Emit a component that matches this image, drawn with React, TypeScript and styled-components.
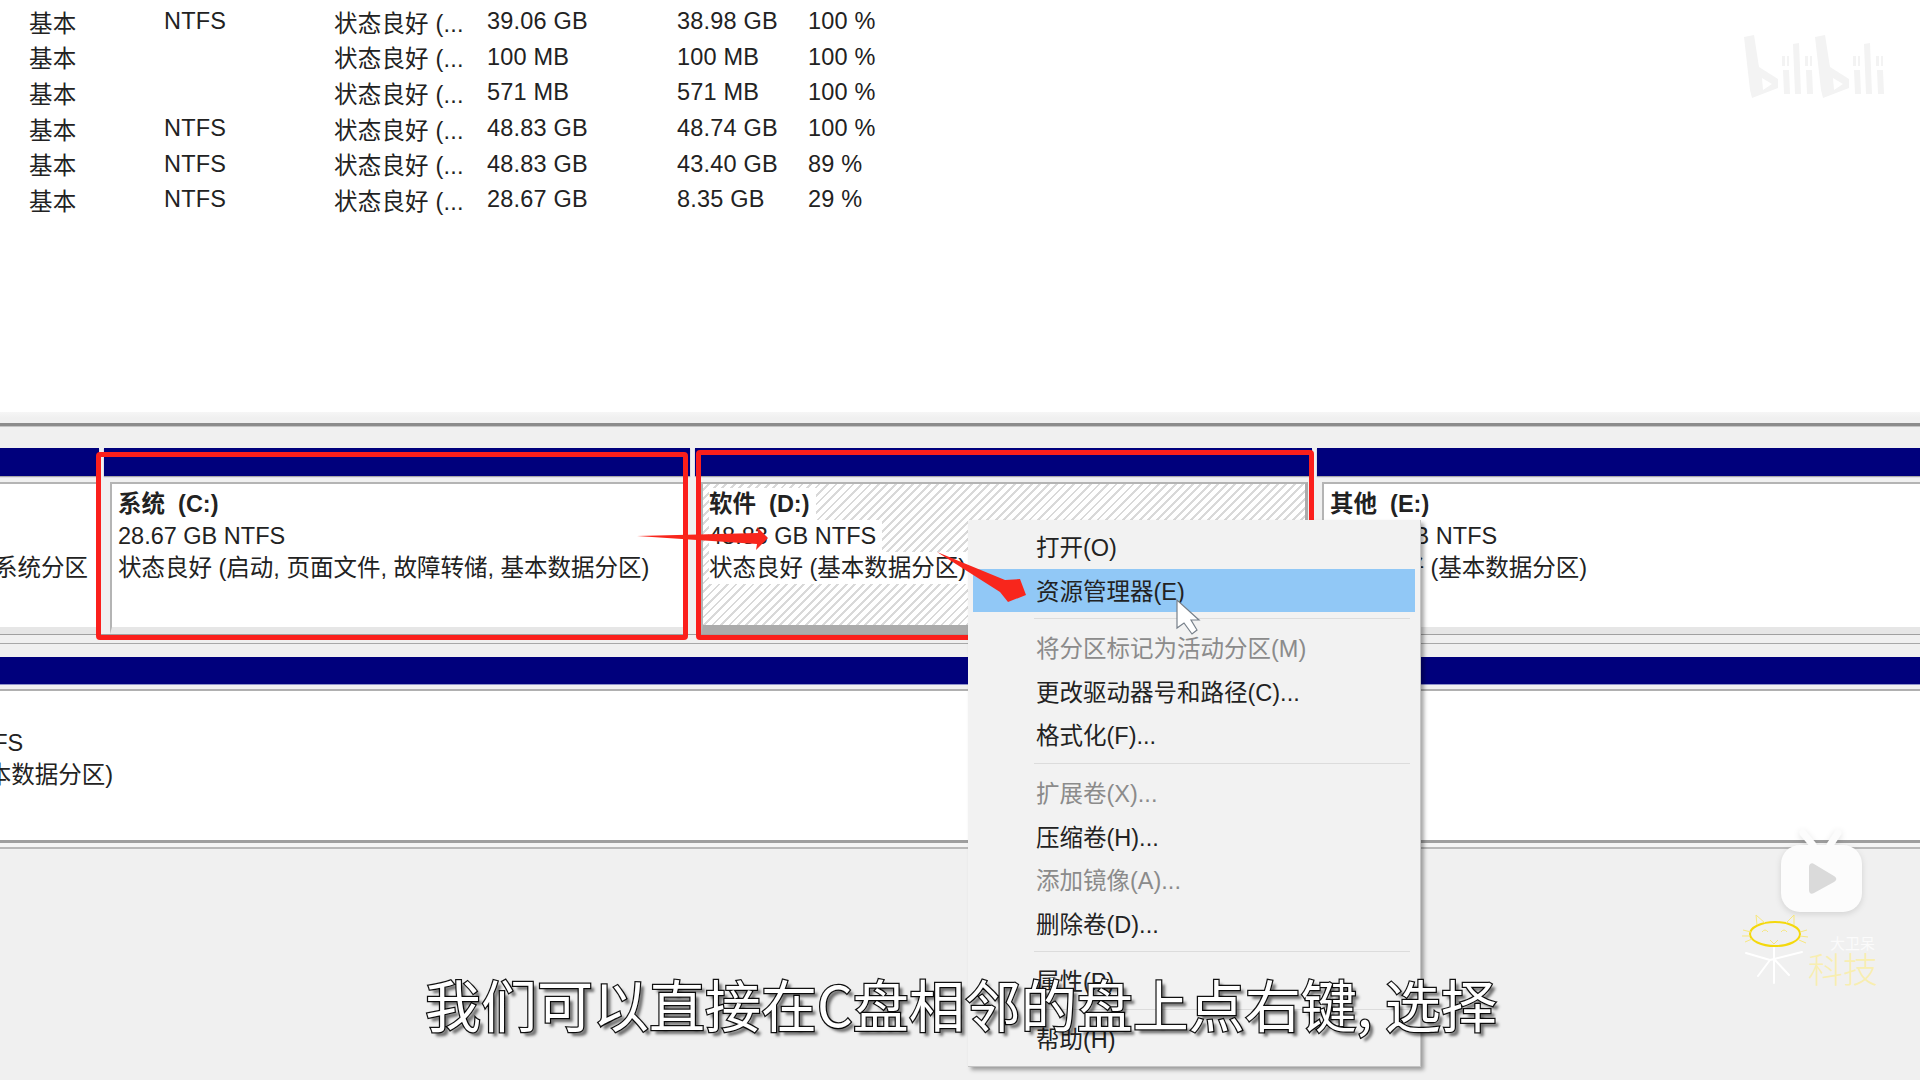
import React from 'react';
import styled, { createGlobalStyle } from 'styled-components';

const GlobalStyle = createGlobalStyle`
  html, body {
    margin: 0;
    padding: 0;
    background: #f0f0f0;
    overflow: hidden;
  }
`;

const FONT = `"Liberation Sans", "Noto Sans CJK SC", sans-serif`;

const Page = styled.div`
  position: relative;
  width: 1920px;
  height: 1080px;
  overflow: hidden;
  background: #f0f0f0;
  font-family: ${FONT};
  font-size: 23.5px;
  color: #222;
`;

// volume list
const VolumeTable = styled.div`
  height: 408px;
  padding: 4px 0 0 29px;
  background: #fff;
`;

const TableRow = styled.div`
  display: grid;
  grid-template-columns: 135px 170px 153px 190px 131px 1fr;
  height: 35.6px;
  align-items: center;
  white-space: nowrap;
  letter-spacing: 0.2px;
`;

const Divider = styled.div`
  height: 36px;
  padding-top: 11px;
  box-sizing: border-box;
  background: linear-gradient(#f6f6f6, #f0f0f0 6px);

  &::before {
    content: '';
    display: block;
    height: 3px;
    background: #8c8c8c;
    border-bottom: 1px solid #c4c4c4;
  }
`;

// disk rows
const DiskRow = styled.div`
  display: flex;
  gap: 5px;
  height: 186px;
  overflow: hidden;
`;

const Volume = styled.div<{ $width: string }>`
  flex: ${({ $width }) => $width};
  min-width: 0;
  display: flex;
  flex-direction: column;
`;

const NavyBar = styled.div<{ $height?: number }>`
  height: ${({ $height }) => $height ?? 28}px;
  flex-shrink: 0;
  background: #00007c;
  box-shadow: 0 1px 1px #8f93c9;
`;

const VolumeFrame = styled.div<{ $inset?: string }>`
  flex: 1;
  min-height: 0;
  padding: ${({ $inset }) => $inset ?? '5px 4px 0 6px'};
  border-top: 1px solid #a8a8a8;
  display: flex;
`;

const VolumeBox = styled.div<{ $hatched?: boolean; $alignEnd?: boolean; $pad?: string }>`
  flex: 1;
  min-width: 0;
  overflow: hidden;
  box-sizing: border-box;
  padding: ${({ $pad }) => $pad ?? '4px 6px'};
  border-top: 2px solid #b4b4b4;
  border-left: ${({ $alignEnd }) => ($alignEnd ? '0' : '2px solid #b4b4b4')};
  border-bottom: 7px solid #e6e6e6;
  display: flex;
  flex-direction: column;
  align-items: ${({ $alignEnd }) => ($alignEnd ? 'flex-end' : 'flex-start')};
  background: ${({ $hatched }) =>
    $hatched
      ? 'repeating-linear-gradient(-45deg, #fff 0 4px, #d9d9d9 4px 6px)'
      : '#fff'};
  ${({ $hatched }) => $hatched && 'border-bottom: 9px solid #ababab; border-right: 3px solid #ababab;'}
`;

const VolumeLine = styled.div<{ $bold?: boolean; $hatched?: boolean }>`
  height: 32px;
  line-height: 32px;
  white-space: pre;
  font-weight: ${({ $bold }) => ($bold ? 700 : 400)};
  ${({ $hatched }) => $hatched && 'background: #fff; padding-right: 6px;'}
`;

const RowGap = styled.div`
  height: 23px;
  box-sizing: border-box;
  border-top: 1px solid #a0a0a0;
  background: #f0f0f0;

  &::before {
    content: '';
    display: block;
    height: 8px;
    border-bottom: 1px solid #a8a8a8;
  }
`;

const SecondDisk = styled.div`
  height: 183px;
  display: flex;
  flex-direction: column;
`;

const SecondBody = styled.div`
  flex: 1;
  padding-top: 36px;
  background: #fff;
  border-top: 2px solid #b0b0b0;
  margin-top: 5px;
  box-shadow: 0 -4px 0 #f0f0f0;
`;

const ClippedText = styled.div`
  margin-left: -144px;
`;

const BottomEdge = styled.div`
  height: 9px;
  border-top: 3px solid #9e9e9e;
  border-bottom: 2px solid #b8b8b8;
  box-sizing: border-box;
  background: #f4f4f4;
`;

// red annotations
const RedFrame = styled.div<{ $x: number; $y: number; $w: number; $h: number }>`
  position: absolute;
  left: ${({ $x }) => $x}px;
  top: ${({ $y }) => $y}px;
  width: ${({ $w }) => $w}px;
  height: ${({ $h }) => $h}px;
  box-sizing: border-box;
  border: 5px solid #fb1f1c;
  border-radius: 4px;
`;

const Annotations = styled.svg`
  position: absolute;
  left: 0;
  top: 0;
  width: 1920px;
  height: 1080px;
  pointer-events: none;
`;

// context menu
const ContextMenu = styled.div`
  position: absolute;
  left: 968px;
  top: 520px;
  width: 453px;
  height: 547px;
  box-sizing: border-box;
  padding: 5px 5px 0;
  background: #f2f2f2;
  border-right: 1px solid #c4c4c4;
  border-bottom: 1px solid #c4c4c4;
  box-shadow: 3px 3px 4px rgba(0, 0, 0, 0.35);
`;

const MenuItem = styled.div<{ $active?: boolean; $disabled?: boolean }>`
  height: 43.6px;
  line-height: 47px;
  padding-left: 63px;
  white-space: nowrap;
  background: ${({ $active }) => ($active ? '#91c8f6' : 'transparent')};
  color: ${({ $disabled }) => ($disabled ? '#8b8b8b' : '#222')};
`;

const MenuSeparator = styled.div`
  height: 1px;
  margin: 6px 5px 7px 61px;
  background: #dcdcdc;
`;

// video overlays
const Subtitle = styled.div`
  position: absolute;
  left: 425px;
  top: 965px;
  font-family: "Noto Sans CJK SC", sans-serif;
  font-size: 56px;
  line-height: 76px;
  white-space: pre;
  color: #fff;
  -webkit-text-stroke: 2.5px #111;
  paint-order: stroke fill;
  text-shadow: 4px 4px 3px rgba(0, 0, 0, 0.55);
`;

const WatermarkLogo = styled.svg`
  position: absolute;
  left: 1700px;
  top: 20px;
  width: 220px;
  height: 100px;
`;

const PlayBadge = styled.svg`
  position: absolute;
  left: 1770px;
  top: 825px;
  width: 105px;
  height: 100px;
  filter: drop-shadow(0 2px 3px rgba(0, 0, 0, 0.12));
`;

const CatLogo = styled.svg`
  position: absolute;
  left: 1740px;
  top: 910px;
  width: 100px;
  height: 80px;
`;

const BrandSmall = styled.div`
  position: absolute;
  left: 1830px;
  top: 932px;
  font-family: "Noto Sans CJK SC", sans-serif;
  font-size: 15px;
  line-height: 22px;
  color: #fbfbfb;
`;

const BrandLarge = styled.div`
  position: absolute;
  left: 1808px;
  top: 943px;
  font-family: "Noto Sans CJK SC", sans-serif;
  font-size: 35px;
  font-weight: 300;
  line-height: 50px;
  color: #f8eeb0;
`;

const rows = [
  ['基本', 'NTFS', '状态良好 (...', '39.06 GB', '38.98 GB', '100 %'],
  ['基本', '', '状态良好 (...', '100 MB', '100 MB', '100 %'],
  ['基本', '', '状态良好 (...', '571 MB', '571 MB', '100 %'],
  ['基本', 'NTFS', '状态良好 (...', '48.83 GB', '48.74 GB', '100 %'],
  ['基本', 'NTFS', '状态良好 (...', '48.83 GB', '43.40 GB', '89 %'],
  ['基本', 'NTFS', '状态良好 (...', '28.67 GB', '8.35 GB', '29 %'],
];

type MenuEntry = { label: string; active?: boolean; disabled?: boolean } | 'sep';

const menu: MenuEntry[] = [
  { label: '打开(O)' },
  { label: '资源管理器(E)', active: true },
  'sep',
  { label: '将分区标记为活动分区(M)', disabled: true },
  { label: '更改驱动器号和路径(C)...' },
  { label: '格式化(F)...' },
  'sep',
  { label: '扩展卷(X)...', disabled: true },
  { label: '压缩卷(H)...' },
  { label: '添加镜像(A)...', disabled: true },
  { label: '删除卷(D)...' },
  'sep',
  { label: '属性(P)' },
  'sep',
  { label: '帮助(H)' },
];

const BiliWord = ({ dx }: { dx: number }) => (
  <g transform={`translate(${dx} 0)`}>
    <path
      fillRule="evenodd"
      d="M44 17 54 15 59 47 78 59 78 68 52 78 50 70ZM62 58 63 70 72 64Z"
    />
    <path d="M82 36h3v10h-3zM87 36h2v10h-2zM83 50h6l1 24h-6z" />
    <path d="M93 24l6-1 2 51h-6z" />
    <path d="M105 36h3v10h-3zM110 36h2v10h-2zM106 50h6l1 24h-6z" />
  </g>
);

export default function App() {
  return (
    <Page>
      <GlobalStyle />
      <VolumeTable>
        {rows.map((row, i) => (
          <TableRow key={i}>
            {row.map((cell, j) => (
              <span key={j}>{cell}</span>
            ))}
          </TableRow>
        ))}
      </VolumeTable>
      <Divider />

      <DiskRow>
        <Volume $width="0 0 99px">
          <NavyBar />
          <VolumeFrame $inset="5px 0 0 0">
            <VolumeBox $alignEnd $pad="4px 11px 4px 0">
              <VolumeLine> </VolumeLine>
              <VolumeLine> </VolumeLine>
              <VolumeLine>状态良好 (系统分区</VolumeLine>
            </VolumeBox>
          </VolumeFrame>
        </Volume>
        <Volume $width="0 0 586px">
          <NavyBar />
          <VolumeFrame>
            <VolumeBox>
              <VolumeLine $bold>系统  (C:)</VolumeLine>
              <VolumeLine>28.67 GB NTFS</VolumeLine>
              <VolumeLine>状态良好 (启动, 页面文件, 故障转储, 基本数据分区)</VolumeLine>
            </VolumeBox>
          </VolumeFrame>
        </Volume>
        <Volume $width="0 0 617px">
          <NavyBar />
          <VolumeFrame>
            <VolumeBox $hatched>
              <VolumeLine $bold $hatched>软件  (D:)</VolumeLine>
              <VolumeLine $hatched>48.83 GB NTFS</VolumeLine>
              <VolumeLine $hatched>状态良好 (基本数据分区)</VolumeLine>
            </VolumeBox>
          </VolumeFrame>
        </Volume>
        <Volume $width="1">
          <NavyBar />
          <VolumeFrame $inset="5px 0 0 5px">
            <VolumeBox>
              <VolumeLine $bold>其他  (E:)</VolumeLine>
              <VolumeLine>48.83 GB NTFS</VolumeLine>
              <VolumeLine>状态良好 (基本数据分区)</VolumeLine>
            </VolumeBox>
          </VolumeFrame>
        </Volume>
      </DiskRow>
      <RowGap />

      <SecondDisk>
        <NavyBar $height={27} />
        <SecondBody>
          <ClippedText>
            <VolumeLine>97.66 GB NTFS</VolumeLine>
            <VolumeLine>状态良好 (基本数据分区)</VolumeLine>
          </ClippedText>
        </SecondBody>
      </SecondDisk>
      <BottomEdge />

      <RedFrame $x={96} $y={452} $w={592} $h={188} />
      <RedFrame $x={696} $y={450} $w={618} $h={190} />

      <ContextMenu>
        {menu.map((entry, i) =>
          entry === 'sep' ? (
            <MenuSeparator key={i} />
          ) : (
            <MenuItem key={i} $active={entry.active} $disabled={entry.disabled}>
              {entry.label}
            </MenuItem>
          )
        )}
      </ContextMenu>

      <Annotations viewBox="0 0 1920 1080">
        <path
          d="M637 536 758 533 757 527 768 538 756 550 757 544Z"
          fill="#f8261c"
        />
        <path
          d="M937 552 1005 580 1020 579 1026 595 1008 602 1000 592Z"
          fill="#f8261c"
        />
        <path
          d="M1177 600V628L1184 623 1192 634 1197 630 1191 620H1199Z"
          fill="#fff"
          stroke="#77808a"
          strokeWidth="1.2"
        />
      </Annotations>

      <Subtitle>我们可以直接在C盘相邻的盘上点右键, 选择</Subtitle>

      <WatermarkLogo viewBox="0 0 220 100" fill="#f3f3f3">
        <BiliWord dx={0} />
        <BiliWord dx={71} />
      </WatermarkLogo>

      <PlayBadge viewBox="0 0 105 100">
        <path
          d="M33 8 43 20M68 8 60 20"
          stroke="#fcfcfc"
          strokeWidth="7"
          strokeLinecap="round"
        />
        <rect x="11" y="20" width="81" height="67" rx="19" fill="#fcfcfc" />
        <path
          d="M39 42c0-3 3-5 5-3l20 12c3 2 3 4 0 6L44 68c-3 2-5 0-5-3Z"
          fill="#dadada"
        />
      </PlayBadge>

      <CatLogo viewBox="0 0 100 80" fill="none">
        <ellipse cx="35" cy="24" rx="25" ry="12" stroke="#f4d80c" strokeWidth="2" />
        <path
          d="M17 15 16 5 25 13M46 13 54 5 54 15M3 20 11 22M2 26 10 26M5 32 12 29M60 22 67 20M60 26 68 27M59 30 66 33M22 22q3-4 6 0M41 22q3-4 6 0M30 30l4 4 4-4"
          stroke="#f7e77f"
          strokeWidth="1"
        />
        <path
          d="M6 43 30 50 M30 50 62 42M34 38V73M30 50 18 66M35 50 49 65"
          stroke="#fff"
          strokeWidth="2"
          strokeLinecap="round"
        />
      </CatLogo>
      <BrandSmall>大卫呆</BrandSmall>
      <BrandLarge>科技</BrandLarge>
    </Page>
  );
}
